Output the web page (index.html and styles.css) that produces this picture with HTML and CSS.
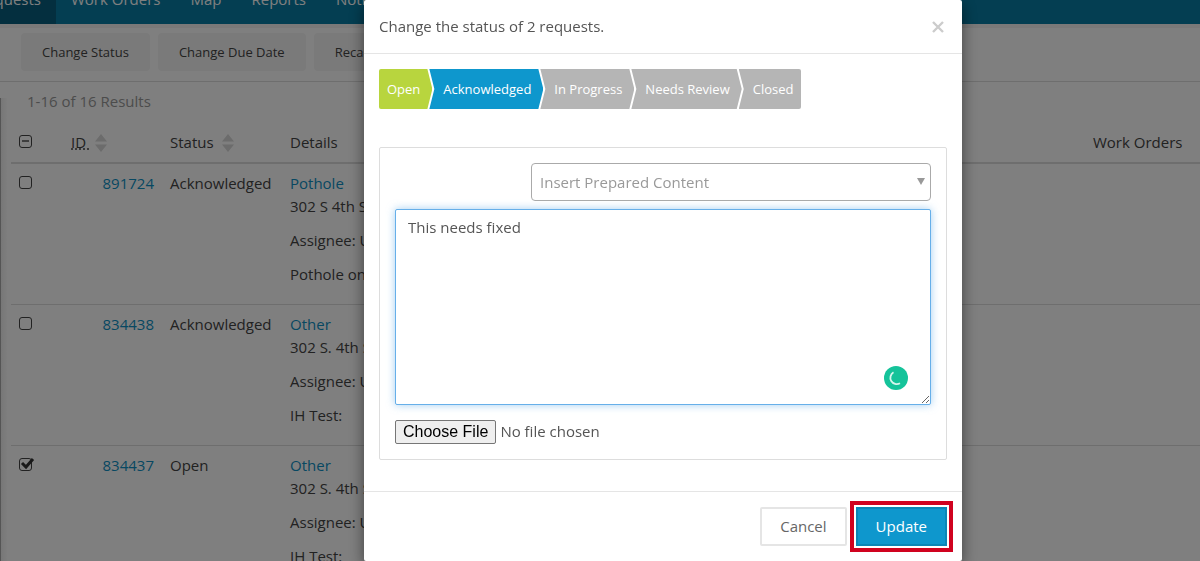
FILE: index.html
```html
<!DOCTYPE html>
<html lang="en">
<head>
<meta charset="utf-8">
<title>Requests</title>
<link rel="stylesheet" href="styles.css">
</head>
<body>
<div class="page">
  <nav class="nav">
    <a class="nav-item nav-active" href="#">Requests</a>
    <a class="nav-item" href="#">Work Orders</a>
    <a class="nav-item" href="#">Map</a>
    <a class="nav-item" href="#">Reports</a>
    <a class="nav-item" href="#">Notifications</a>
  </nav>
  <div class="toolbar">
    <button class="tool" type="button">Change Status</button>
    <button class="tool" type="button">Change Due Date</button>
    <button class="tool" type="button">Recalculate</button>
  </div>
  <main class="results">
    <p class="count">1-16 of 16 Results</p>
    <table class="grid">
      <colgroup><col class="c-check"><col class="c-id"><col class="c-status"><col><col class="c-orders"></colgroup>
      <thead>
        <tr>
          <th><span class="check"><input type="checkbox" aria-label="Select all"><svg class="mark" viewBox="0 0 16 14"><path d="M3 7h7" stroke="#444" stroke-width="1.4"/></svg></span></th>
          <th><span class="sortable"><abbr title="Request number">ID&nbsp;</abbr><svg class="sort" viewBox="0 0 12 18"><path d="M6 0l6 7.500H0zM6 18l6-7.500H0z"/></svg></span></th>
          <th><span class="sortable status-head">Status<svg class="sort" viewBox="0 0 12 18"><path d="M6 0l6 7.500H0zM6 18l6-7.500H0z"/></svg></span></th>
          <th>Details</th>
          <th>Work Orders</th>
        </tr>
      </thead>
      <tbody>
        <tr>
          <td><span class="check"><input type="checkbox" aria-label="Select 891724"></span></td>
          <td class="num"><a href="#">891724</a></td>
          <td>Acknowledged</td>
          <td><a href="#">Pothole</a><br>302 S 4th St<p>Assignee: Unassigned</p><p>Pothole on road</p></td>
          <td></td>
        </tr>
        <tr>
          <td><span class="check"><input type="checkbox" aria-label="Select 834438"></span></td>
          <td class="num"><a href="#">834438</a></td>
          <td>Acknowledged</td>
          <td><a href="#">Other</a><br>302 S. 4th St<p>Assignee: Unassigned</p><p>IH Test:</p></td>
          <td></td>
        </tr>
        <tr>
          <td><span class="check"><input type="checkbox" aria-label="Select 834437" checked><svg class="mark" viewBox="0 0 16 14"><path d="M3 6l4 4 7-8" fill="none" stroke="#333" stroke-width="3"/></svg></span></td>
          <td class="num"><a href="#">834437</a></td>
          <td>Open</td>
          <td><a href="#">Other</a><br>302 S. 4th St<p>Assignee: Unassigned</p><p>IH Test:</p></td>
          <td></td>
        </tr>
      </tbody>
    </table>
  </main>
</div>

<div class="overlay">
  <div class="modal" role="dialog" aria-labelledby="modal-title">
    <header class="modal-head">
      <h1 class="modal-title" id="modal-title">Change the status of 2 requests.</h1>
      <button class="close" type="button" aria-label="Close"><svg width="12" height="12" viewBox="0 0 12 12"><path d="M1 1l10 10M11 1L1 11" stroke="#ccc" stroke-width="2.400"/></svg></button>
    </header>
    <div class="modal-body">
      <div class="steps">
        <button class="step step-open" type="button">Open</button>
        <button class="step step-current" type="button">Acknowledged</button>
        <button class="step" type="button">In Progress</button>
        <button class="step" type="button">Needs Review</button>
        <button class="step step-last" type="button">Closed</button>
      </div>
      <form class="card">
        <div class="select-wrap">
          <select class="select" aria-label="Insert Prepared Content"><option>Insert Prepared Content</option></select>
          <svg class="caret" width="8" height="7" viewBox="0 0 8 7"><path d="M0 0h8L4 7z" fill="#999"/></svg>
        </div>
        <div class="text-wrap">
          <textarea class="textarea" aria-label="Comment">This needs fixed</textarea>
          <svg class="checker" width="24" height="24" viewBox="0 0 24 24"><circle cx="12" cy="12" r="12" fill="#15c39a"/><path d="M9.500 6.300A6.300 6.300 0 1 0 16 17.300" fill="none" stroke="#d6f5ed" stroke-width="1.800"/></svg>
        </div>
        <input class="file" type="file" aria-label="Attachment">
      </form>
    </div>
    <footer class="modal-foot">
      <button class="btn" type="button">Cancel</button>
      <button class="btn btn-primary" type="button">Update</button>
    </footer>
  </div>
</div>
</body>
</html>
```
FILE: styles.css
```css
* { box-sizing: border-box; }

body {
  margin: 0;
  height: 100vh;
  overflow: hidden;
  font: 15px/23px "Open Sans", "Noto Sans", sans-serif;
  color: #444;
  background: #fff;
}

button, select, textarea, input { font: inherit; }
a { color: #0e90c4; text-decoration: none; }

.nav {
  display: flex;
  align-items: flex-end;
  height: 28px;
  overflow: hidden;
  background: #087ca4;
  border-bottom: 4px solid #f4f2f2;
}
.nav-item {
  padding: 0 15px;
  line-height: 50px;
  color: #fff;
  white-space: nowrap;
}
.nav-active {
  display: flex;
  justify-content: flex-end;
  width: 56px;
  background: #085e7e;
}

.toolbar {
  display: flex;
  gap: 8px;
  height: 54px;
  padding: 5px 21px;
  border-bottom: 1px solid #ddd;
}
.tool {
  height: 38px;
  padding: 0 21px;
  border: 0;
  border-radius: 4px;
  background: #f5f5f5;
  font-size: 13px;
  color: #444;
}

.results {
  padding: 8px 0 0 11px;
  background: linear-gradient(90deg, #aaa 1px, #eee 1px, #fff 8px) no-repeat 0 16px;
}
.count { margin: 0 16px; color: #999; }

.grid {
  width: 100%;
  table-layout: fixed;
  border-collapse: collapse;
}
.c-check { width: 52px; }
.c-id { width: 99px; }
.c-status { width: 120px; }
.c-orders { width: 115px; }
.grid th, .grid td {
  padding: 8px;
  text-align: left;
  vertical-align: top;
  font-weight: 400;
  white-space: nowrap;
}
.grid th { padding: 18px 8px 8px; border-bottom: 2px solid #ddd; }
.grid td { border-top: 1px solid #ddd; overflow: hidden; }
.grid .num { text-align: right; }
.grid p { margin: 11px 0; }
.grid p:last-child { margin-bottom: 10px; }

.sortable { display: flex; align-items: center; gap: 5px; }
.status-head { gap: 8px; }
.sortable abbr { text-decoration: underline dotted; }
.sort { width: 12px; height: 18px; fill: #d8d8d8; }

.check { position: relative; display: flex; align-items: center; height: 20px; }
.check input {
  appearance: none;
  width: 13px;
  height: 13px;
  margin: 0;
  border: 1px solid #444;
  border-radius: 3px;
}
.mark { position: absolute; left: 0; top: 3px; width: 16px; height: 14px; }

.overlay {
  position: fixed;
  inset: 0;
  display: flex;
  justify-content: center;
  padding-left: 126px;
  background: rgba(0, 0, 0, .5);
}
.modal {
  align-self: flex-start;
  width: 598px;
  border-radius: 2px;
  background: #fff;
  color: #555;
  box-shadow: 0 5px 15px rgba(0, 0, 0, .5);
}
.modal-head {
  display: flex;
  align-items: center;
  justify-content: space-between;
  padding: 15px 15px;
  border-bottom: 1px solid #e5e5e5;
}
.modal-title { margin: 0; font-size: 15px; font-weight: 400; }
.close { display: flex; padding: 3px; border: 0; background: none; }
.modal-body { padding: 15px 15px 31px; }

.steps { display: flex; margin-bottom: 38px; }
.step {
  height: 40px;
  margin-left: -3px;
  padding: 0 12px 0 14px;
  border: 0;
  background: #b5b5b5;
  color: #fff;
  font-size: 13px;
  white-space: nowrap;
  clip-path: polygon(0 0, calc(100% - 5px) 0, 100% 50%, calc(100% - 5px) 100%, 0 100%, 5px 50%);
}
.step-open {
  margin-left: 0;
  padding-left: 8px;
  background: #b8d53e;
  border-radius: 2px 0 0 2px;
  clip-path: polygon(0 0, calc(100% - 5px) 0, 100% 50%, calc(100% - 5px) 100%, 0 100%);
}
.step-current { background: #0e97cd; }
.step-last {
  padding-right: 8px;
  border-radius: 0 2px 2px 0;
  clip-path: polygon(0 0, 100% 0, 100% 100%, 0 100%, 5px 50%);
}

.card {
  padding: 15px;
  border: 1px solid #ddd;
  border-radius: 2px;
}
.select-wrap { position: relative; width: 400px; margin: 0 0 8px auto; }
.select {
  display: block;
  appearance: none;
  width: 100%;
  height: 38px;
  padding: 0 24px 0 8px;
  border: 1px solid #aaa;
  border-radius: 4px;
  background: #fff;
  color: #999;
}
.caret { position: absolute; right: 6px; top: 15px; }
.text-wrap { position: relative; }
.textarea {
  display: block;
  width: 100%;
  height: 196px;
  padding: 6px 12px;
  border: 1px solid #66afe9;
  border-radius: 2px;
  outline: 0;
  color: #555;
  box-shadow: 0 0 8px rgba(102, 175, 233, .6);
}
.checker { position: absolute; right: 23px; bottom: 15px; }
.file { display: block; width: 100%; margin-top: 15px; color: #555; }
.file::file-selector-button {
  height: 24px;
  padding: 1px 7px;
  border: 1px solid #767676;
  border-radius: 2px;
  background: #efefef;
  color: #000;
  font: 16px/20px "Liberation Sans", Arial, sans-serif;
}

.modal-foot {
  display: flex;
  justify-content: flex-end;
  gap: 9px;
  padding: 15px 15px;
  border-top: 1px solid #e5e5e5;
}
.btn {
  height: 39px;
  padding: 0 18px;
  border: 2px solid #e5e5e5;
  border-radius: 2px;
  background: #fff;
  color: #666;
}
.btn-primary {
  border-color: #0a86b6;
  border-radius: 0;
  background: #0e97cd;
  color: #fff;
  outline: 4px solid #d0021f;
  outline-offset: 2px;
}
```
